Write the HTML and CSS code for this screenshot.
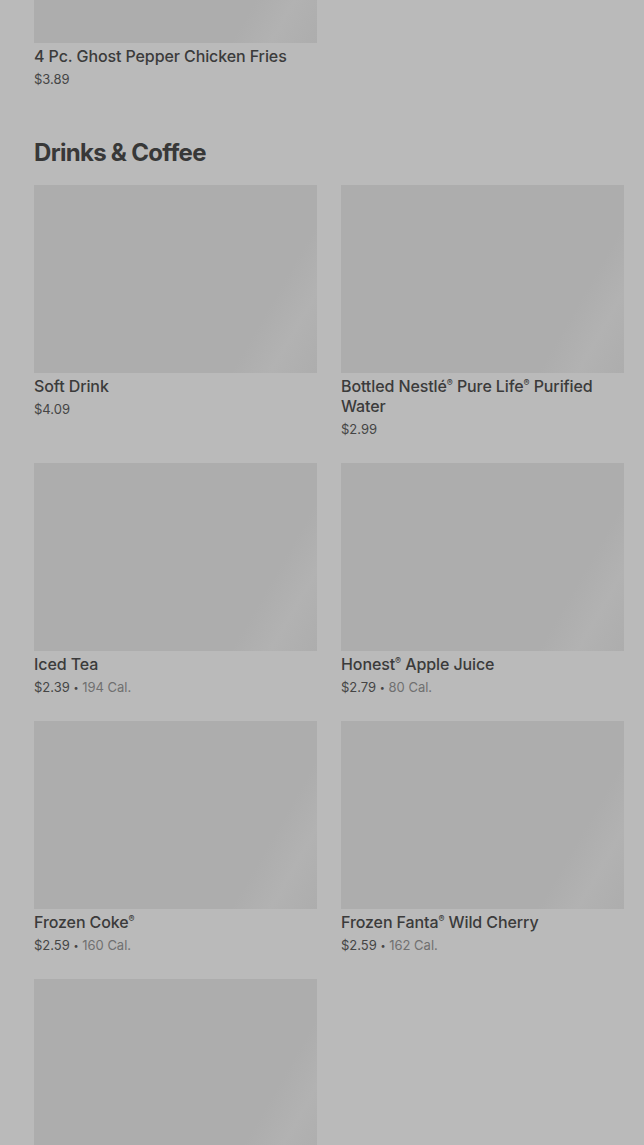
FILE: index.html
```html
<!DOCTYPE html>
<html lang="en">
<head>
  <meta charset="UTF-8">
  <title>Menu</title>
  <meta name="viewport" content="width=device-width, initial-scale=1">
  <link rel="stylesheet" href="styles.css">
</head>
<body>
  <div class="menu">
    <section class="category">
      <div class="grid">
        <div class="item">
          <div class="thumb"></div>
          <div class="name">4 Pc. Ghost Pepper Chicken Fries</div>
          <div class="meta">$3.89</div>
        </div>
      </div>
    </section>

    <section class="category">
      <h2>Drinks &amp; Coffee</h2>
      <div class="grid">
        <div class="item">
          <div class="thumb"></div>
          <div class="name">Soft Drink</div>
          <div class="meta">$4.09</div>
        </div>
        <div class="item">
          <div class="thumb"></div>
          <div class="name">Bottled Nestlé<sup>®</sup> Pure Life<sup>®</sup> Purified Water</div>
          <div class="meta">$2.99</div>
        </div>
        <div class="item">
          <div class="thumb"></div>
          <div class="name">Iced Tea</div>
          <div class="meta">$2.39 <span class="dot">•</span> <span class="cal">194 Cal.</span></div>
        </div>
        <div class="item">
          <div class="thumb"></div>
          <div class="name">Honest<sup>®</sup> Apple Juice</div>
          <div class="meta">$2.79 <span class="dot">•</span> <span class="cal">80 Cal.</span></div>
        </div>
        <div class="item">
          <div class="thumb"></div>
          <div class="name">Frozen Coke<sup>®</sup></div>
          <div class="meta">$2.59 <span class="dot">•</span> <span class="cal">160 Cal.</span></div>
        </div>
        <div class="item">
          <div class="thumb"></div>
          <div class="name">Frozen Fanta<sup>®</sup> Wild Cherry</div>
          <div class="meta">$2.59 <span class="dot">•</span> <span class="cal">162 Cal.</span></div>
        </div>
        <div class="item">
          <div class="thumb"></div>
          <div class="name">&nbsp;</div>
          <div class="meta">&nbsp;</div>
        </div>
      </div>
    </section>
  </div>
</body>
</html>
```

FILE: styles.css
```css
body {
  margin: 0;
  padding: 0;
  background: #bababa;
  font-family: Inter, 'Noto Sans', Arial, sans-serif;
  color: #3b3b3b;
  overflow: hidden;
}
.menu {
  margin-top: -145px;
  padding: 0 20px 0 34px;
}
.category {
  margin-bottom: 48px;
}
.category h2 {
  margin: 0 0 16px 0;
  font-size: 24px;
  line-height: 32px;
  font-weight: 700;
  letter-spacing: -0.7px;
  color: #383838;
}
.grid {
  display: grid;
  grid-template-columns: 283px 283px;
  column-gap: 24px;
  row-gap: 24px;
}
.thumb {
  height: 188px;
  background: linear-gradient(120deg, #adadad 0%, #adadad 78%, #b2b2b2 88%, #adadad 100%);
}
.name {
  margin-top: 3px;
  font-size: 16px;
  line-height: 20px;
  font-weight: 500;
  letter-spacing: -0.1px;
  color: #3b3b3b;
}
.name sup {
  font-size: 9px;
  line-height: 0;
  vertical-align: baseline;
  position: relative;
  top: -6px;
}
.meta {
  margin-top: 3px;
  height: 20px;
  font-size: 13px;
  line-height: 20px;
  color: #454545;
}
.dot {
  font-size: 9px;
  line-height: 0;
  position: relative;
  top: -1px;
}
.cal {
  color: #707070;
}
```
